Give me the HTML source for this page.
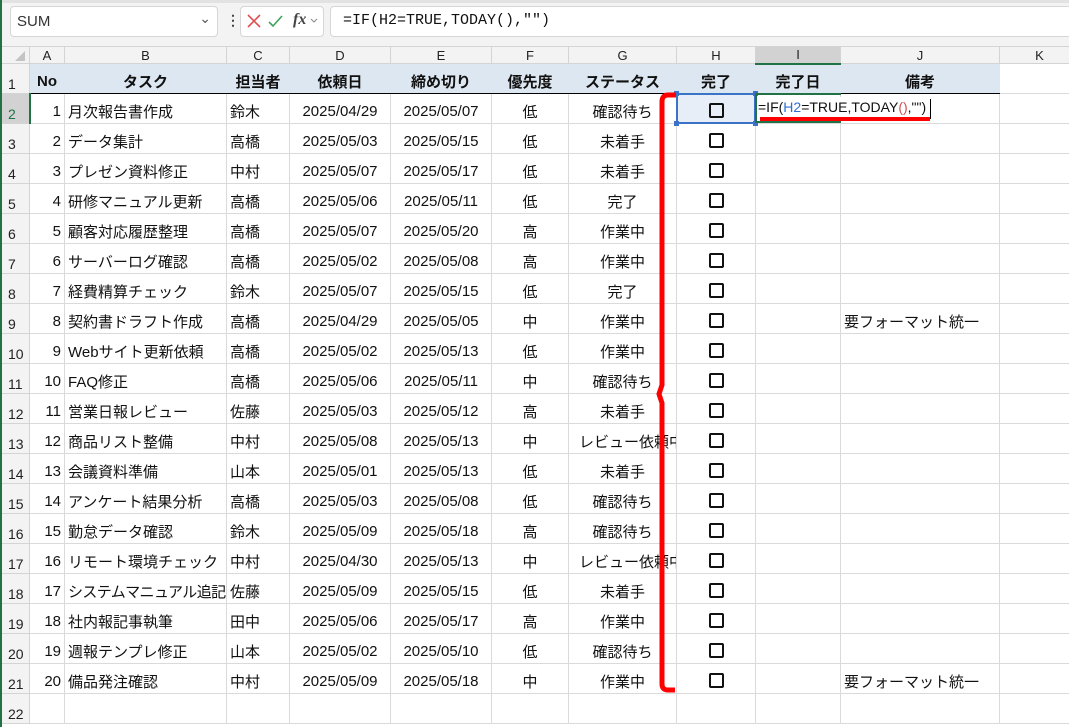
<!DOCTYPE html>
<html><head><meta charset="utf-8"><style>
*{margin:0;padding:0;box-sizing:border-box}
body{width:1069px;height:727px;overflow:hidden;background:#fff;font-family:"Liberation Sans","Noto Sans CJK JP",sans-serif;position:relative}
.top{position:absolute;left:0;top:0;width:1069px;height:46px;background:#f3f3f3;border-top:3px solid #e2e2e2}
.box{position:absolute;background:#fff;border:1px solid #d6d6d6;border-radius:4px;top:6px;height:31px}
.g{position:absolute;left:0;top:0;width:2px;height:727px;background:#217346}
table{position:absolute;left:0;top:46px;border-collapse:collapse;table-layout:fixed;width:1079px}
td{border:1px solid #dadada;height:30px;font-size:15px;color:#111;white-space:nowrap;overflow:hidden;padding:5px 3px 0 3px}
tr.ch td{height:17px;background:#f3f3f3;text-align:center;font-size:13px;color:#222;padding:0;border-color:#d4d4d4}
td.rh{background:#f3f3f3;font-size:14px;text-align:left;padding:10px 0 0 7px;color:#222;border-color:#d4d4d4}
tr.hd td.c{background:#dde7f1;font-weight:bold;text-align:center;border-bottom:1px solid #000;border-left-color:#dde7f1;border-right-color:#dde7f1}
.r{text-align:right}.m{text-align:center}
.cb{display:inline-block;width:15px;height:15px;border:2px solid #111;border-radius:2px;margin-top:2px}
</style></head><body>
<div class="top"></div>
<div class="box" style="left:10px;width:208px"><span style="position:absolute;left:6px;top:6px;font-size:15px;color:#333">SUM</span><span style="position:absolute;right:6px;top:3px;font-size:14px;color:#555">⌄</span></div>
<span style="position:absolute;left:226px;top:12px;font-size:14px;color:#444;font-weight:bold">⋮</span>
<div class="box" style="left:240px;width:84px">
<svg width="84" height="29" style="position:absolute;left:0;top:0"><path d="M7 8l12 12M19 8L7 20" stroke="#e05050" stroke-width="1.6" fill="none"/><path d="M28 15l4 4 9-10" stroke="#3ba35a" stroke-width="1.6" fill="none"/><path d="M70 12l3 3 3-3" stroke="#888" stroke-width="1" fill="none"/></svg>
<span style="position:absolute;left:52px;top:4px;font-family:'Liberation Serif',serif;font-style:italic;font-weight:bold;font-size:16px;color:#444">fx</span></div>
<div class="box" style="left:330px;width:745px"><span style="position:absolute;left:12px;top:5px;font-family:'Liberation Mono',monospace;font-size:15px;color:#111">=IF(H2=TRUE,TODAY(),"")</span></div>
<table>
<colgroup><col style="width:29px"><col style="width:35px"><col style="width:162px"><col style="width:63px"><col style="width:101px"><col style="width:101px"><col style="width:77px"><col style="width:108px"><col style="width:79px"><col style="width:85px"><col style="width:159px"><col style="width:80px"></colgroup>
<tr class="ch"><td style="background:#f3f3f3;height:16px"><svg width="12" height="12" style="margin:2px 0 0 13px;display:block"><path d="M11 1V11H1Z" fill="#c4c4c4"/></svg></td><td>A</td><td>B</td><td>C</td><td>D</td><td>E</td><td>F</td><td>G</td><td>H</td><td style="background:#d2d2d2;border-bottom:2px solid #217346">I</td><td>J</td><td>K</td></tr>
<tr class="hd"><td class="rh">1</td><td class="c" style="text-align:left;padding-left:7px">No</td><td class="c">タスク</td><td class="c">担当者</td><td class="c">依頼日</td><td class="c">締め切り</td><td class="c">優先度</td><td class="c">ステータス</td><td class="c">完了</td><td class="c">完了日</td><td class="c">備考</td><td></td></tr>
<tr><td class="rh" style="background:#d2d2d2;color:#217346;border-right:2px solid #217346">2</td><td class="r">1</td><td>月次報告書作成</td><td>鈴木</td><td class="m">2025/04/29</td><td class="m">2025/05/07</td><td class="m">低</td><td class="m">確認待ち</td><td class="m" style="background:#e8eef7"><span class="cb"></span></td><td></td><td></td><td></td></tr>
<tr><td class="rh">3</td><td class="r">2</td><td>データ集計</td><td>高橋</td><td class="m">2025/05/03</td><td class="m">2025/05/15</td><td class="m">低</td><td class="m">未着手</td><td class="m"><span class="cb"></span></td><td></td><td></td><td></td></tr>
<tr><td class="rh">4</td><td class="r">3</td><td>プレゼン資料修正</td><td>中村</td><td class="m">2025/05/07</td><td class="m">2025/05/17</td><td class="m">低</td><td class="m">未着手</td><td class="m"><span class="cb"></span></td><td></td><td></td><td></td></tr>
<tr><td class="rh">5</td><td class="r">4</td><td>研修マニュアル更新</td><td>高橋</td><td class="m">2025/05/06</td><td class="m">2025/05/11</td><td class="m">低</td><td class="m">完了</td><td class="m"><span class="cb"></span></td><td></td><td></td><td></td></tr>
<tr><td class="rh">6</td><td class="r">5</td><td>顧客対応履歴整理</td><td>高橋</td><td class="m">2025/05/07</td><td class="m">2025/05/20</td><td class="m">高</td><td class="m">作業中</td><td class="m"><span class="cb"></span></td><td></td><td></td><td></td></tr>
<tr><td class="rh">7</td><td class="r">6</td><td>サーバーログ確認</td><td>高橋</td><td class="m">2025/05/02</td><td class="m">2025/05/08</td><td class="m">高</td><td class="m">作業中</td><td class="m"><span class="cb"></span></td><td></td><td></td><td></td></tr>
<tr><td class="rh">8</td><td class="r">7</td><td>経費精算チェック</td><td>鈴木</td><td class="m">2025/05/07</td><td class="m">2025/05/15</td><td class="m">低</td><td class="m">完了</td><td class="m"><span class="cb"></span></td><td></td><td></td><td></td></tr>
<tr><td class="rh">9</td><td class="r">8</td><td>契約書ドラフト作成</td><td>高橋</td><td class="m">2025/04/29</td><td class="m">2025/05/05</td><td class="m">中</td><td class="m">作業中</td><td class="m"><span class="cb"></span></td><td></td><td>要フォーマット統一</td><td></td></tr>
<tr><td class="rh">10</td><td class="r">9</td><td>Webサイト更新依頼</td><td>高橋</td><td class="m">2025/05/02</td><td class="m">2025/05/13</td><td class="m">低</td><td class="m">作業中</td><td class="m"><span class="cb"></span></td><td></td><td></td><td></td></tr>
<tr><td class="rh">11</td><td class="r">10</td><td>FAQ修正</td><td>高橋</td><td class="m">2025/05/06</td><td class="m">2025/05/11</td><td class="m">中</td><td class="m">確認待ち</td><td class="m"><span class="cb"></span></td><td></td><td></td><td></td></tr>
<tr><td class="rh">12</td><td class="r">11</td><td>営業日報レビュー</td><td>佐藤</td><td class="m">2025/05/03</td><td class="m">2025/05/12</td><td class="m">高</td><td class="m">未着手</td><td class="m"><span class="cb"></span></td><td></td><td></td><td></td></tr>
<tr><td class="rh">13</td><td class="r">12</td><td>商品リスト整備</td><td>中村</td><td class="m">2025/05/08</td><td class="m">2025/05/13</td><td class="m">中</td><td style="padding-left:10px">レビュー依頼中</td><td class="m"><span class="cb"></span></td><td></td><td></td><td></td></tr>
<tr><td class="rh">14</td><td class="r">13</td><td>会議資料準備</td><td>山本</td><td class="m">2025/05/01</td><td class="m">2025/05/13</td><td class="m">低</td><td class="m">未着手</td><td class="m"><span class="cb"></span></td><td></td><td></td><td></td></tr>
<tr><td class="rh">15</td><td class="r">14</td><td>アンケート結果分析</td><td>高橋</td><td class="m">2025/05/03</td><td class="m">2025/05/08</td><td class="m">低</td><td class="m">確認待ち</td><td class="m"><span class="cb"></span></td><td></td><td></td><td></td></tr>
<tr><td class="rh">16</td><td class="r">15</td><td>勤怠データ確認</td><td>鈴木</td><td class="m">2025/05/09</td><td class="m">2025/05/18</td><td class="m">高</td><td class="m">確認待ち</td><td class="m"><span class="cb"></span></td><td></td><td></td><td></td></tr>
<tr><td class="rh">17</td><td class="r">16</td><td>リモート環境チェック</td><td>中村</td><td class="m">2025/04/30</td><td class="m">2025/05/13</td><td class="m">中</td><td style="padding-left:10px">レビュー依頼中</td><td class="m"><span class="cb"></span></td><td></td><td></td><td></td></tr>
<tr><td class="rh">18</td><td class="r">17</td><td style="letter-spacing:-0.6px">システムマニュアル追記</td><td>佐藤</td><td class="m">2025/05/09</td><td class="m">2025/05/15</td><td class="m">低</td><td class="m">未着手</td><td class="m"><span class="cb"></span></td><td></td><td></td><td></td></tr>
<tr><td class="rh">19</td><td class="r">18</td><td>社内報記事執筆</td><td>田中</td><td class="m">2025/05/06</td><td class="m">2025/05/17</td><td class="m">高</td><td class="m">作業中</td><td class="m"><span class="cb"></span></td><td></td><td></td><td></td></tr>
<tr><td class="rh">20</td><td class="r">19</td><td>週報テンプレ修正</td><td>山本</td><td class="m">2025/05/02</td><td class="m">2025/05/10</td><td class="m">低</td><td class="m">確認待ち</td><td class="m"><span class="cb"></span></td><td></td><td></td><td></td></tr>
<tr><td class="rh">21</td><td class="r">20</td><td>備品発注確認</td><td>中村</td><td class="m">2025/05/09</td><td class="m">2025/05/18</td><td class="m">中</td><td class="m">作業中</td><td class="m"><span class="cb"></span></td><td></td><td>要フォーマット統一</td><td></td></tr>
<tr><td class="rh">22</td><td></td><td></td><td></td><td></td><td></td><td></td><td></td><td></td><td></td><td></td><td></td></tr>
</table>
<div class="g"></div>
<!-- I2 formula overlay -->
<div style="position:absolute;left:757px;top:97px;width:176px;height:21px;background:#fff;font-size:14px;color:#111;white-space:nowrap;padding-left:1px;line-height:21px;overflow:hidden">=IF(<span style="color:#2e6fd0">H2</span>=TRUE,TODAY<span style="color:#d05050">()</span>,"")</div>
<!-- selection H2 -->
<div style="position:absolute;left:676px;top:93px;width:80px;height:31px;border:2px solid #3a73c8"></div>
<div style="position:absolute;left:674px;top:91px;width:5px;height:5px;background:#3a73c8"></div>
<div style="position:absolute;left:753px;top:91px;width:5px;height:5px;background:#3a73c8"></div>
<div style="position:absolute;left:674px;top:121px;width:5px;height:5px;background:#3a73c8"></div>
<div style="position:absolute;left:753px;top:121px;width:5px;height:5px;background:#3a73c8"></div>
<!-- I2 edit -->
<div style="position:absolute;left:755px;top:93px;width:2px;height:30px;background:#217346"></div>
<div style="position:absolute;left:756px;top:93px;width:85px;height:2px;background:#217346"></div>
<div style="position:absolute;left:756px;top:121px;width:85px;height:2px;background:#217346"></div>
<div style="position:absolute;left:930px;top:99px;width:1px;height:20px;background:#000"></div>
<div style="position:absolute;left:760px;top:117px;width:170px;height:4px;background:#f00"></div>
<!-- red bracket -->
<svg width="40" height="620" style="position:absolute;left:650px;top:85px"><path d="M26 10H18Q12 10 12 17V300L9 309L12 318V599Q12 605 18 605H25" stroke="#f00" stroke-width="5" fill="none"/></svg>
</body></html>
